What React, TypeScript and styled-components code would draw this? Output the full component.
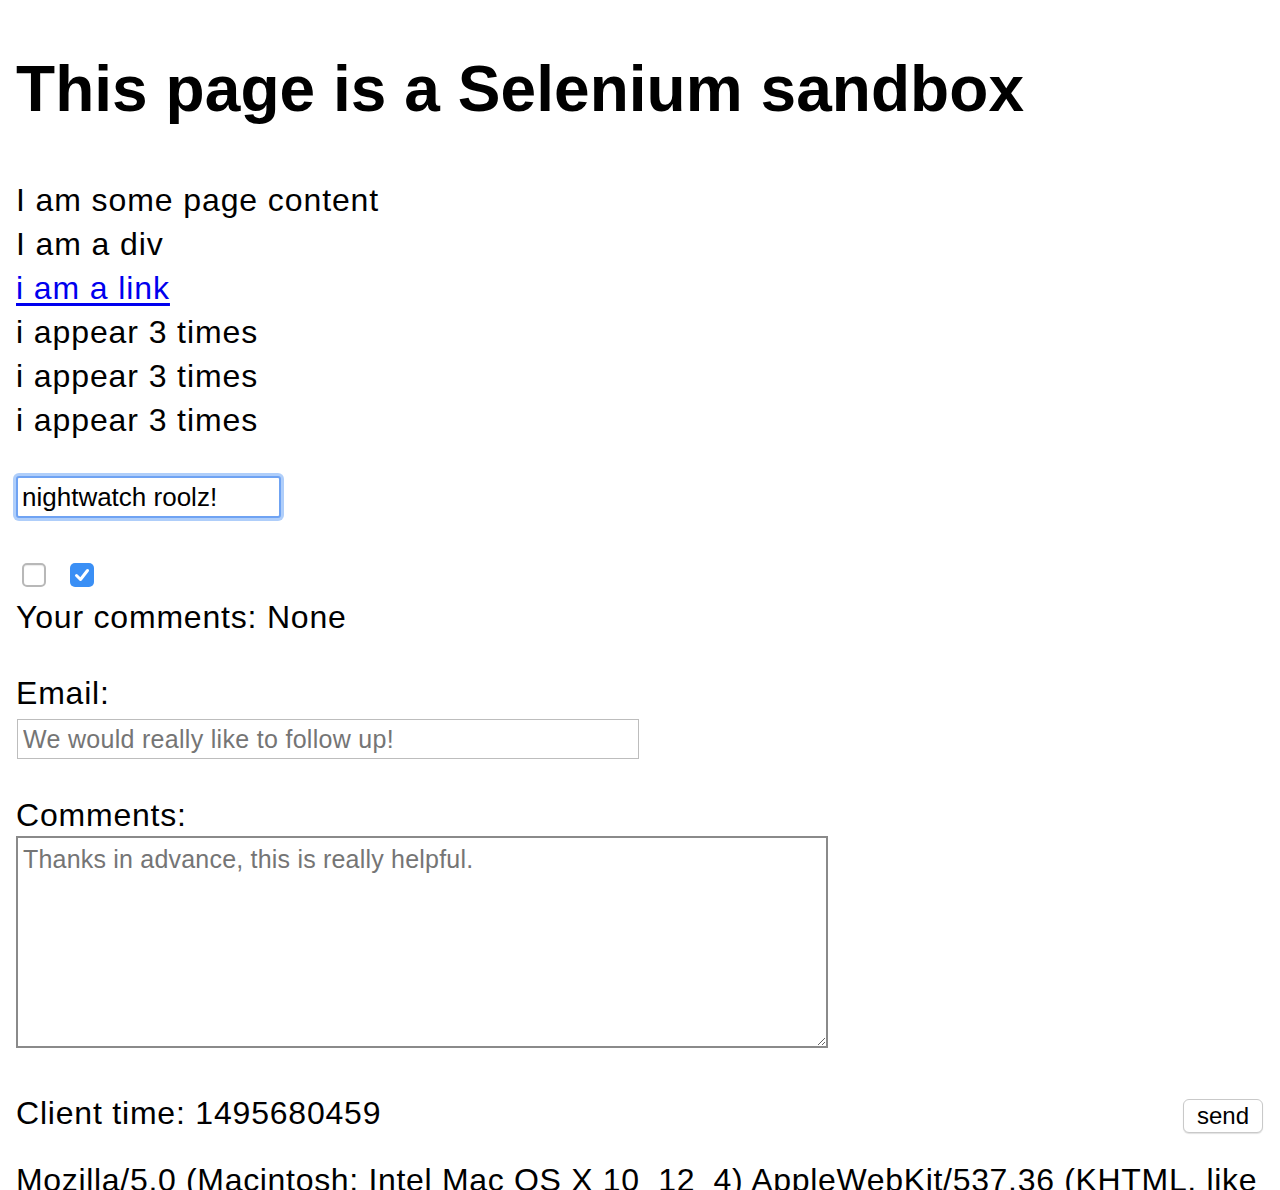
import React from "react";
import styled, { createGlobalStyle } from "styled-components";

const Global = createGlobalStyle`
  html, body { margin: 0; padding: 0; background: #fff; }
  body { font-family: "Liberation Sans", Arial, sans-serif; color: #000; }
`;

const Page = styled.div`
  padding: 0 16px 0 16px;
  font-size: 32px;
  line-height: 44px;
  letter-spacing: 0.8px;
`;

const Title = styled.h1`
  margin: 52px 0 52px 0;
  font-size: 64px;
  line-height: 74px;
  font-weight: 700;
  letter-spacing: 0.05px;
`;

const Line = styled.div`
  height: 44px;
  letter-spacing: 0.9px;
`;

const Link = styled.a`
  color: #0000ee;
  text-decoration: underline;
  text-underline-offset: 4px;
`;

const NameInput = styled.input`
  display: block;
  box-sizing: border-box;
  margin: 34px 0 0 0;
  width: 265px;
  height: 42px;
  padding: 0 4px;
  font-family: "Liberation Sans", Arial, sans-serif;
  font-size: 26px;
  color: #000;
  border: 2px solid #6fa3f3;
  border-radius: 3px;
  box-shadow: 0 0 0 3px rgba(110, 165, 245, 0.55);
  outline: none;
`;

const CheckRow = styled.div`
  display: flex;
  gap: 24px;
  margin: 45px 0 0 6px;
`;

const Box = styled.span<{ $checked?: boolean }>`
  box-sizing: border-box;
  width: 24px;
  height: 24px;
  border-radius: 5px;
  border: ${(p) => (p.$checked ? "none" : "2px solid #b8b8b8")};
  background: ${(p) => (p.$checked ? "#3a8ff5" : "#fff")};
  box-shadow: ${(p) => (p.$checked ? "none" : "inset 0 1px 1px rgba(0,0,0,0.08)")};
  display: flex;
  align-items: center;
  justify-content: center;
`;

const Comments = styled.div`
  margin-top: 8px;
  height: 44px;
`;

const Label = styled.div<{ $top: number }>`
  margin-top: ${(p) => p.$top}px;
  height: 44px;
`;

const EmailInput = styled.input`
  display: block;
  box-sizing: border-box;
  margin: 4px 0 0 1px;
  width: 622px;
  height: 40px;
  padding: 0 5px;
  font-family: "Liberation Sans", Arial, sans-serif;
  font-size: 25px;
  letter-spacing: 0.3px;
  border: 1px solid #bdbdbd;
  outline: none;
  &::placeholder { color: #757575; }
`;

const TextArea = styled.textarea`
  display: block;
  box-sizing: border-box;
  margin: -1px 0 0 0;
  width: 812px;
  height: 212px;
  padding: 6px 5px;
  font-family: "Liberation Sans", Arial, sans-serif;
  font-size: 25px;
  line-height: 30px;
  letter-spacing: 0.2px;
  border: 2px solid #8a8a8a;
  outline: none;
  resize: both;
  &::placeholder { color: #757575; }
`;

const ClientRow = styled.div`
  display: flex;
  justify-content: space-between;
  align-items: center;
  margin-top: 43px;
  height: 44px;
`;

const SendButton = styled.button`
  box-sizing: border-box;
  width: 80px;
  height: 34px;
  margin-top: 6px;
  margin-right: 1px;
  background: #fff;
  border: 1px solid #c9c9c9;
  border-radius: 6px;
  box-shadow: 0 1px 1px rgba(0, 0, 0, 0.12);
  font-family: "Liberation Sans", Arial, sans-serif;
  font-size: 24px;
  color: #000;
  padding: 0;
`;

const Agent = styled.div`
  margin-top: 23px;
  letter-spacing: 0.68px;
`;

export default function App() {
  return (
    <>
      <Global />
      <Page>
        <Title>This page is a Selenium sandbox</Title>
        <Line>I am some page content</Line>
        <Line>I am a div</Line>
        <Line>
          <Link href="#">i am a link</Link>
        </Line>
        <Line>i appear 3 times</Line>
        <Line>i appear 3 times</Line>
        <Line>i appear 3 times</Line>
        <NameInput defaultValue="nightwatch roolz!" spellCheck />
        <CheckRow>
          <Box />
          <Box $checked>
            <svg width="24" height="24" viewBox="0 0 24 24">
              <path d="M6.5 12.5 L10.5 16.5 L17.5 7.5" fill="none" stroke="#fff" strokeWidth="3" strokeLinecap="round" strokeLinejoin="round" />
            </svg>
          </Box>
        </CheckRow>
        <Comments>Your comments: None</Comments>
        <Label $top={32}>Email:</Label>
        <EmailInput placeholder="We would really like to follow up!" />
        <Label $top={34}>Comments:</Label>
        <TextArea placeholder="Thanks in advance, this is really helpful." />
        <ClientRow>
          <span>Client time: 1495680459</span>
          <SendButton>send</SendButton>
        </ClientRow>
        <Agent>
          Mozilla/5.0 (Macintosh; Intel Mac OS X 10_12_4) AppleWebKit/537.36 (KHTML, like Gecko) Chrome/58.0.3029.110 Safari/537.36
        </Agent>
      </Page>
    </>
  );
}
